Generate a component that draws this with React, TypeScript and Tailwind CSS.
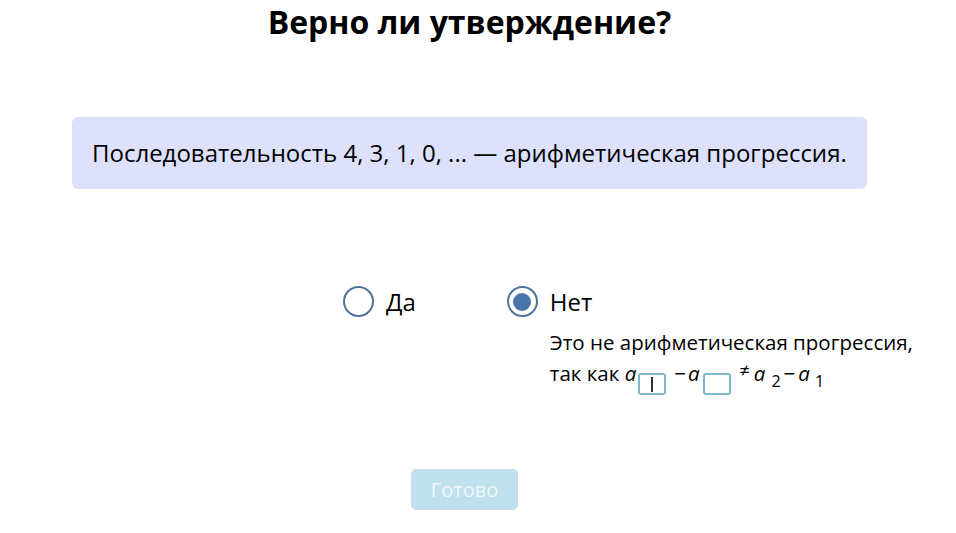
import React, { useState } from 'react';

type Answer = 'yes' | 'no';

const Radio: React.FC<{ checked: boolean; label: string; onClick: () => void }> = ({ checked, label, onClick }) => (
  <button type="button" onClick={onClick} className="flex items-center gap-[12px] cursor-pointer">
    <span className="flex h-[31px] w-[31px] items-center justify-center rounded-full border-2 border-[#4f7298] bg-white">
      {checked && <span className="h-[18px] w-[18px] rounded-full bg-[#4a74a8]" />}
    </span>
    <span className="text-[24px] leading-[31px] text-black">{label}</span>
  </button>
);

// empty index field used in the formula
const IndexBox: React.FC<{ caret?: boolean; className?: string }> = ({ caret, className = '' }) => (
  <span className={`relative inline-block h-[22px] w-[28px] rounded-[3px] border-2 border-[#80b6cb] bg-white align-[-14px] ${className}`}>
    {caret && <span className="absolute left-[11px] top-[2px] h-[15px] w-[2px] bg-[#333]" />}
  </span>
);

export default function App() {
  const [answer, setAnswer] = useState<Answer>('no');

  return (
    <div className="min-h-[533px] w-[939px] bg-white text-black" style={{ fontFamily: '"Open Sans", "Noto Sans", sans-serif' }}>
      {/* Title */}
      <h1 className="text-center text-[32px] font-bold leading-[44px]">Верно ли утверждение?</h1>

      {/* Statement */}
      <div className="mt-[73px] ml-[72px] flex h-[72px] w-[795px] items-center rounded-[6px] bg-[#dde1fb] px-[20px]">
        <p className="text-[24px] leading-[32px]">Последовательность 4, 3, 1, 0, ... — арифметическая прогрессия.</p>
      </div>

      {/* Answers */}
      <div className="mt-[97px] ml-[343px] flex items-start gap-[91px]">
        <Radio checked={answer === 'yes'} label="Да" onClick={() => setAnswer('yes')} />
        <div className="flex flex-col">
          <Radio checked={answer === 'no'} label="Нет" onClick={() => setAnswer('no')} />
          {answer === 'no' && (
            <div className="mt-[10px] ml-[43px] text-[20.5px] leading-[31px]">
              <div>Это не арифметическая прогрессия,</div>
              <div className="whitespace-nowrap">
                <span>так как </span>
                <i>a</i>
                <IndexBox caret className="ml-[2px]" />
                <span className="ml-[8px]">−</span>
                <i className="ml-[2px]">a</i>
                <IndexBox className="ml-[3px]" />
                <span className="relative -top-[4px] ml-[9px] text-[18px]">≠</span>
                <i className="ml-[4px]">a</i>
                <sub className="bottom-[-6px] ml-[6px] text-[16px]">2</sub>
                <span className="ml-[3px]">−</span>
                <i className="ml-[3px]">a</i>
                <sub className="bottom-[-6px] ml-[5px] text-[16px]">1</sub>
              </div>
            </div>
          )}
        </div>
      </div>

      {/* Submit */}
      <div className="mt-[74px] ml-[411px]">
        <button type="button" disabled className="h-[41px] w-[107px] rounded-[5px] bg-[#bfe0ec] text-[20px] text-[#eef7fa]">
          Готово
        </button>
      </div>
    </div>
  );
}
